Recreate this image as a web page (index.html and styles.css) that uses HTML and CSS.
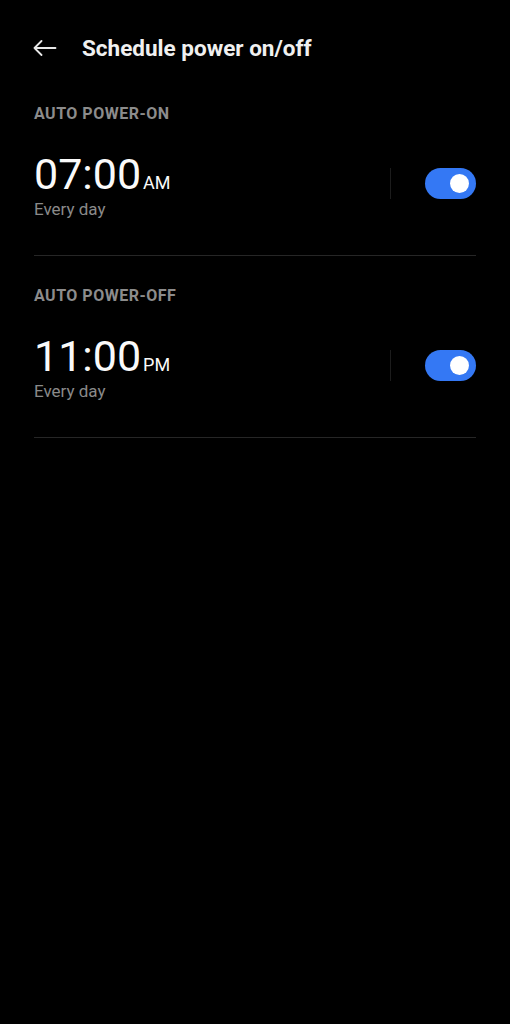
FILE: index.html
```html
<!DOCTYPE html>
<html lang="en">
<head>
  <meta charset="UTF-8" />
  <meta name="viewport" content="width=device-width, initial-scale=1.0"/>
  <title>Schedule power on/off</title>
  <link rel="stylesheet" href="styles.css">
</head>
<body>
  <div class="page">
    <!-- Top bar -->
    <div class="top-bar">
      <svg class="back-icon" width="24" height="16" viewBox="0 0 24 16">
        <path d="M1.5 8 H22.5 M1.5 8 L8.5 1 M1.5 8 L8.5 15" fill="none" stroke="#e8e8e8" stroke-width="1.8" stroke-linecap="round" stroke-linejoin="round"/>
      </svg>
      <h1 class="title">Schedule power on/off</h1>
    </div>

    <!-- Power on -->
    <div class="section">
      <div class="section-label">AUTO POWER-ON</div>
      <div class="schedule-row">
        <div class="time-info">
          <div class="time">07:00<span class="ampm">AM</span></div>
          <div class="repeat">Every day</div>
        </div>
        <div class="row-end">
          <div class="v-divider"></div>
          <div class="switch on"><div class="knob"></div></div>
        </div>
      </div>
    </div>

    <!-- Power off -->
    <div class="section">
      <div class="section-label">AUTO POWER-OFF</div>
      <div class="schedule-row">
        <div class="time-info">
          <div class="time">11:00<span class="ampm">PM</span></div>
          <div class="repeat">Every day</div>
        </div>
        <div class="row-end">
          <div class="v-divider"></div>
          <div class="switch on"><div class="knob"></div></div>
        </div>
      </div>
    </div>
  </div>
</body>
</html>
```

FILE: styles.css
```css
body {
  margin: 0;
  background: #000;
  font-family: Roboto, 'Noto Sans', sans-serif;
  color: #fff;
}

.page {
  min-height: 1024px;
  background: #000;
}

.top-bar {
  display: flex;
  align-items: center;
  height: 52px;
  padding: 22px 33px 0;
}

.back-icon {
  flex-shrink: 0;
}

.title {
  margin: 0 0 0 25px;
  font-size: 22.5px;
  font-weight: 700;
  color: #f0f0f0;
}

.section {
  margin: 0 34px;
  padding-top: 30px;
  border-bottom: 1px solid #262626;
}

.section-label {
  font-size: 16px;
  font-weight: 700;
  letter-spacing: 0.5px;
  color: #8c8c8c;
  line-height: 20px;
}

.schedule-row {
  display: flex;
  justify-content: space-between;
  align-items: flex-start;
  padding: 32px 0 36px;
}

.time {
  font-size: 43px;
  font-weight: 400;
  line-height: 36px;
  color: #fafafa;
}

.ampm {
  font-size: 18px;
  line-height: 1;
  margin-left: 2px;
}

.repeat {
  margin-top: 7px;
  font-size: 17px;
  color: #8a8a8a;
  line-height: 20px;
}

.row-end {
  display: flex;
  align-items: center;
  gap: 34px;
  margin-top: 12px;
}

.v-divider {
  width: 1px;
  height: 31px;
  background: #1c1c1c;
}

.switch {
  display: flex;
  align-items: center;
  justify-content: flex-end;
  width: 51px;
  height: 31px;
  padding: 0 7px;
  box-sizing: border-box;
  border-radius: 16px;
  background: #3a3a3a;
}

.switch.on {
  background: #3478f4;
}

.knob {
  width: 19px;
  height: 19px;
  border-radius: 50%;
  background: #fff;
}
```
